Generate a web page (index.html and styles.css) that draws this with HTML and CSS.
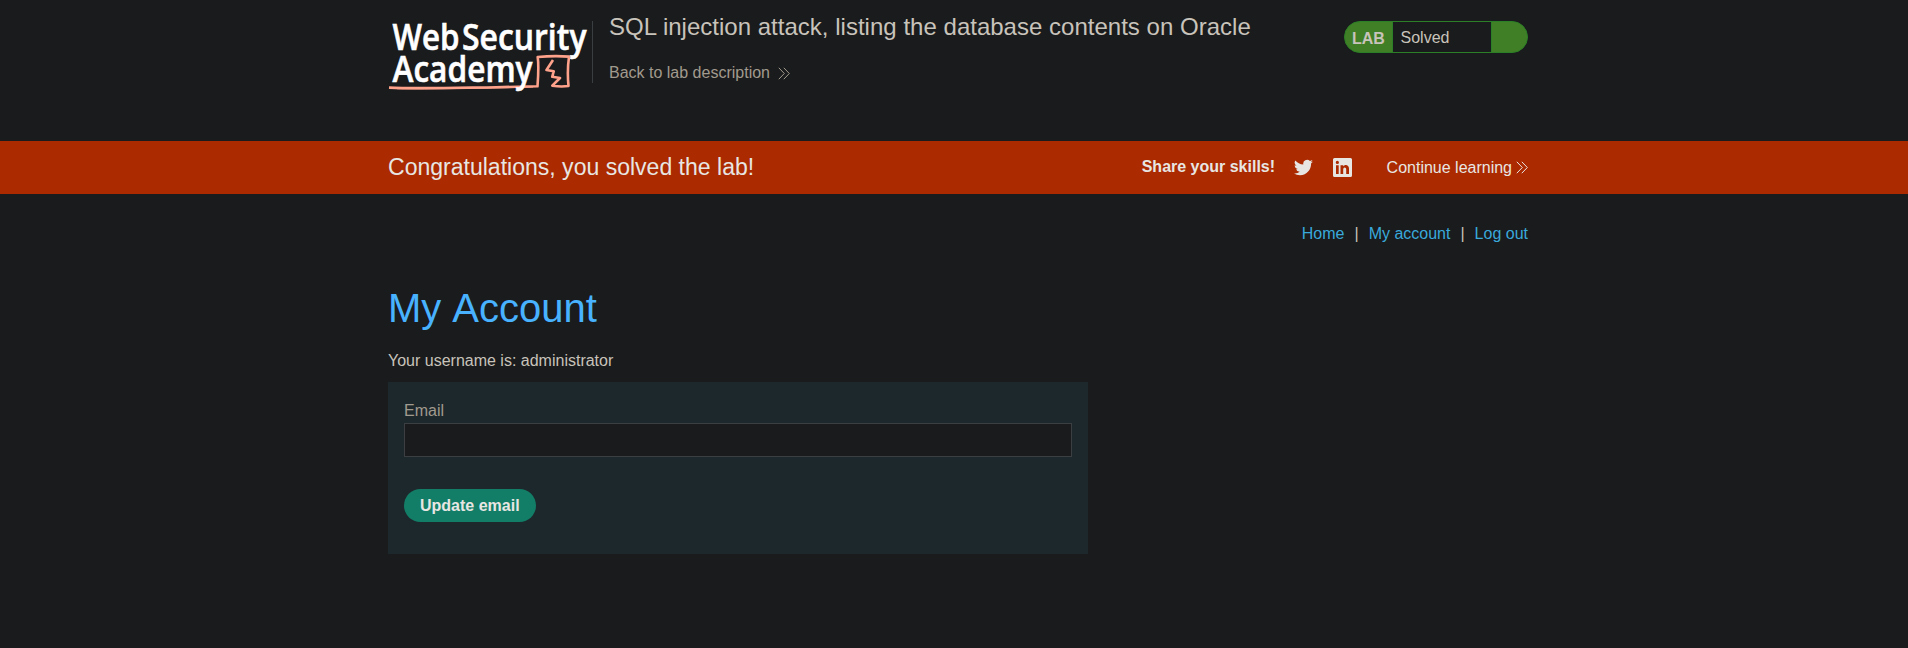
FILE: index.html
```html
<!DOCTYPE html>
<html lang="en">
<head>
<meta charset="utf-8">
<title>SQL injection attack, listing the database contents on Oracle</title>
<link rel="stylesheet" href="styles.css">
</head>
<body>
<header class="lab-header">
  <div class="container header-row">
    <svg class="logo" width="204" height="86" viewBox="0 0 204 86" role="img" aria-label="Web Security Academy">
      <g class="logo-text">
        <text x="4.500" y="38.800" textLength="67" lengthAdjust="spacingAndGlyphs">Web</text>
        <text x="74" y="38.800" textLength="124.500" lengthAdjust="spacingAndGlyphs">Security</text>
      </g>
      <g fill="none" stroke="#ffa28b" stroke-linejoin="round" transform="translate(0 10)">
        <path d="M1 66.600C30 68 80 66.500 108 66.200L149.500 65.300Q151 45 149.700 36Q166 34.500 181 35.600Q179 50 180.500 65Q173 66 164.300 64.700L172 57L164.200 55.800L165.700 50.300L158.500 49L165 39" stroke-width="2.600"/>
        <path d="M9 67.700Q60 68.500 145 66" stroke-width="1"/>
      </g>
      <g class="logo-text">
        <text x="4.500" y="70.800" textLength="140" lengthAdjust="spacingAndGlyphs">Academy</text>
      </g>
    </svg>
    <div class="title-block">
      <h2>SQL injection attack, listing the database contents on Oracle</h2>
      <a class="back-link">Back to lab description
        <svg class="chevrons" width="12" height="13" viewBox="0 0 12 13"><path d="M.8.800L6.300 6.500L.8 12.200M5.800.800L11.300 6.500L5.800 12.200"/></svg>
      </a>
    </div>
    <div class="lab-status"><span class="lab-label">LAB</span><p>Solved</p></div>
  </div>
</header>
<section class="banner">
  <div class="container banner-row">
    <h4>Congratulations, you solved the lab!</h4>
    <div class="share">
      <strong>Share your skills!</strong>
      <svg class="twitter" width="19" height="17" viewBox="0 2 24 20"><path d="M23.950 4.570a10 10 0 0 1-2.820.770 4.960 4.960 0 0 0 2.160-2.720c-.950.550-2 .950-3.130 1.180a4.920 4.920 0 0 0-8.380 4.480C7.690 8.090 4.070 6.130 1.640 3.160a4.920 4.920 0 0 0 1.520 6.570 4.900 4.900 0 0 1-2.230-.610v.060a4.920 4.920 0 0 0 3.950 4.830 5 5 0 0 1-2.210.080 4.940 4.940 0 0 0 4.600 3.420A9.870 9.870 0 0 1 0 19.540a13.990 13.990 0 0 0 7.550 2.210c9.140 0 14.300-7.720 14.010-14.650a10.020 10.020 0 0 0 2.390-2.530z"/></svg>
      <svg class="linkedin" width="19" height="19" viewBox="0 0 19 19"><path fill-rule="evenodd" d="M1.500 0h16Q19 0 19 1.500v16q0 1.500-1.500 1.500h-16Q0 19 0 17.500v-16Q0 0 1.500 0zM3 7.200v8.800h2.700V7.200zM4.350 2.800a1.600 1.600 0 1 0 0 3.200a1.600 1.600 0 0 0 0-3.200zM7.500 7.200v8.800h2.700v-4.500c0-2.800 3-2.700 3-.1V16H16v-5.200c0-4.300-4.300-4.700-5.800-2.300V7.200z"/></svg>
      <a class="continue">Continue learning
        <svg class="chevrons" width="12" height="13" viewBox="0 0 12 13"><path d="M.8.800L6.300 6.500L.8 12.200M5.800.800L11.300 6.500L5.800 12.200"/></svg>
      </a>
    </div>
  </div>
</section>
<main class="container">
  <nav class="links"><a>Home</a><span>|</span><a>My account</a><span>|</span><a>Log out</a></nav>
  <h1>My Account</h1>
  <p class="username">Your username is: administrator</p>
  <form class="login-form">
    <label for="email">Email</label>
    <input id="email" type="email">
    <button type="button">Update email</button>
  </form>
</main>
</body>
</html>
```
FILE: styles.css
```css
* { box-sizing: border-box; }
body {
  margin: 0;
  background: #1a1b1c;
  color: #c8c3bb;
  font: 16px/20px "Liberation Sans", Arial, sans-serif;
}
h1, h2, h4, p { margin: 0; font-weight: 400; }
.container { width: 1140px; margin-left: calc(50% - 566px); }
.lab-header { height: 141px; }
.header-row { display: flex; align-items: flex-start; }
.logo { flex: none; margin-top: 11px; overflow: visible; }
.logo-text {
  fill: #fff;
  stroke: #fff;
  stroke-width: .6px;
  font: 600 35.5px "Open Sans", "Noto Sans", sans-serif;
}
.title-block {
  display: flex;
  flex-direction: column;
  height: 62px;
  margin-top: 21px;
  padding-left: 16px;
  border-left: 1px solid #3a3e41;
}
.title-block h2 {
  margin-top: -9px;
  font-size: 24px;
  line-height: 30px;
  word-spacing: .12px;
  white-space: nowrap;
}
.back-link {
  display: flex;
  align-items: center;
  gap: 8px;
  margin-top: 21px;
  color: #a19a8e;
}
.chevrons { fill: none; stroke: currentColor; stroke-width: 1; }
.lab-status {
  display: flex;
  width: 184px;
  height: 32px;
  margin: 21px 0 0 auto;
  border: 1px solid #2c7f26;
  border-radius: 16px;
  background: #407f26;
  overflow: hidden;
}
.lab-label { width: 47px; padding: 7px 0 0 7px; font-weight: 700; }
.lab-status p {
  width: 100px;
  padding: 6px 0 0 7.5px;
  border: solid #2c7f26;
  border-width: 0 1px;
  background: #1a1b1c;
}
.banner { height: 53px; background: #ab2a00; color: #e8e6e3; }
.banner-row, .share { display: flex; align-items: center; height: 53px; }
.banner h4 { margin-top: -2px; font-size: 23.04px; white-space: nowrap; }
.share { margin-left: auto; }
.share strong { margin-top: -2px; }
.share > svg { fill: #e8e6e3; }
.twitter { margin-left: 18.5px; }
.linkedin { margin-left: 20px; }
.continue { display: flex; align-items: center; gap: 4px; margin-left: 35px; }
.links {
  display: flex;
  justify-content: flex-end;
  gap: 10px;
  padding-top: 30px;
}
.links a { color: #39a9db; }
h1 {
  margin-top: 39px;
  color: #48b2ff;
  font-size: 40px;
  line-height: 50px;
  word-spacing: 2px;
}
.username { margin-top: 18px; }
.login-form {
  display: flex;
  flex-direction: column;
  align-items: flex-start;
  width: 700px;
  height: 172px;
  margin-top: 11px;
  padding: 19px 16px;
  background: #1d282c;
}
.login-form label { color: #a19a8e; }
.login-form input {
  width: 100%;
  height: 34px;
  margin: 2px 0 32px;
  border: 1px solid #3b3f41;
  background: #1a1b1c;
}
.login-form button {
  height: 33px;
  padding: 0 16px;
  border: 0;
  border-radius: 17px;
  background: #127e67;
  color: #e8e6e3;
  font: 700 16px "Liberation Sans", Arial, sans-serif;
}
```
